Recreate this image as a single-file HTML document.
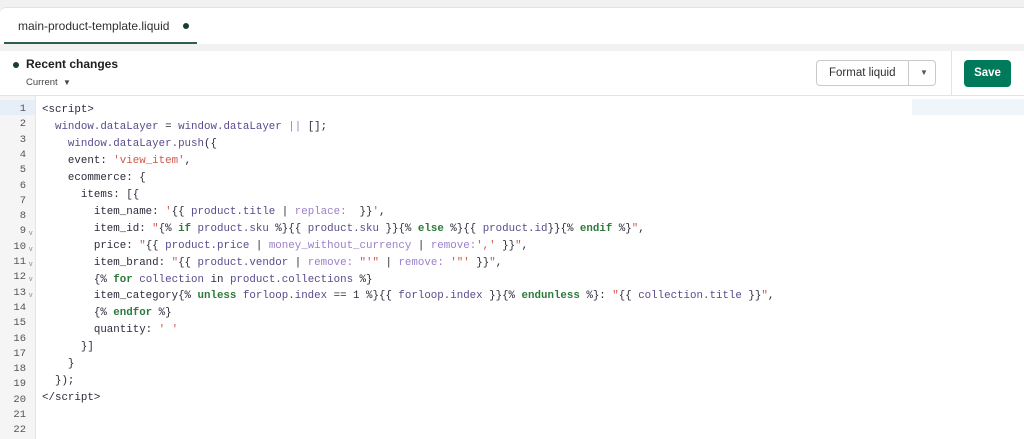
<!DOCTYPE html>
<html><head><style>
body{margin:0;width:1024px;height:439px;background:#f1f1f1;overflow:hidden;font-family:"Liberation Sans",sans-serif;position:relative}
.tabbar{position:absolute;left:0;top:7px;width:1024px;height:36px;background:#fff;border-top:1px solid #e3e3e3;border-radius:6px 0 0 0}
.tab{position:absolute;left:18px;top:11px;font-size:12px;color:#303030}
.dot{position:absolute;width:6px;height:6px;border-radius:50%;background:#1a3d33}
.ul{position:absolute;left:4px;top:34px;width:193px;height:2px;background:#2e5e4e}
.hdr{position:absolute;left:0;top:51px;width:1024px;height:44px;background:#fff;border-bottom:1px solid #e3e3e3}
.rc{position:absolute;left:26px;top:6px;font-size:12px;color:#202020;font-weight:600}
.cur{position:absolute;left:26px;top:26px;font-size:9.5px;color:#444}
.fmt{position:absolute;left:816px;top:9px;width:120px;height:26px;border:1px solid #c9c9c9;border-radius:4px;box-sizing:border-box;font-size:11.5px;color:#303030}
.save{position:absolute;left:964px;top:9px;width:47px;height:27px;background:#007a5a;border-radius:4px;color:#fff;font-size:11.5px;font-weight:bold;text-align:center;line-height:27px}
.sep{position:absolute;left:951px;top:0;width:1px;height:44px;background:#e3e3e3}
.code{position:absolute;left:0;top:96px;width:1024px;height:343px;background:#fff}
.gut{position:absolute;left:0;top:0;width:35px;height:343px;background:#f5f5f5;border-right:1px solid #e6e6e6}
.ln{position:absolute;left:0;width:26px;text-align:right;font:10.5px "Liberation Mono",monospace;color:#555}
.fo{position:absolute;left:29px;font-size:7px;color:#888}
.l{position:absolute;left:42px;font:10.8px "Liberation Mono",monospace;color:#2b2b3b;white-space:pre}
.p{color:#5b4a8c}.f{color:#9b7fc9}.s{color:#d0584a}.k{color:#2c7a3c;font-weight:bold}
</style></head><body>
<div class="tabbar"><div class="tab">main-product-template.liquid</div><div class="dot" style="left:183px;top:15px"></div><div class="ul"></div></div>
<div class="hdr">
<div class="dot" style="left:13px;top:11px"></div>
<div class="rc">Recent changes</div>
<div class="cur">Current &nbsp;<span style="font-size:8px">▼</span></div>
<div class="fmt"><span style="position:absolute;left:12px;top:6px">Format liquid</span><div style="position:absolute;left:91px;top:0;width:1px;height:24px;background:#c9c9c9"></div><span style="position:absolute;left:103px;top:7px;font-size:8px;color:#555">▼</span></div>
<div class="sep"></div>
<div class="save">Save</div>
</div>
<div class="code">
<div style="position:absolute;left:912px;top:3px;width:112px;height:16px;background:#eef6fc"></div>
<div class="gut"><div style="position:absolute;left:0;top:4px;width:35px;height:15px;background:#e6eef7"></div></div>
<div class="ln" style="top:7px">1</div><div class="ln" style="top:22px">2</div><div class="ln" style="top:38px">3</div><div class="ln" style="top:53px">4</div><div class="ln" style="top:68px">5</div><div class="ln" style="top:84px">6</div><div class="ln" style="top:99px">7</div><div class="ln" style="top:114px">8</div><div class="ln" style="top:129px">9</div><div class="ln" style="top:145px">10</div><div class="ln" style="top:160px">11</div><div class="ln" style="top:175px">12</div><div class="ln" style="top:191px">13</div><div class="ln" style="top:206px">14</div><div class="ln" style="top:221px">15</div><div class="ln" style="top:237px">16</div><div class="ln" style="top:252px">17</div><div class="ln" style="top:267px">18</div><div class="ln" style="top:282px">19</div><div class="ln" style="top:298px">20</div><div class="ln" style="top:313px">21</div><div class="ln" style="top:328px">22</div>
<div class="fo" style="top:134px">v</div><div class="fo" style="top:150px">v</div><div class="fo" style="top:165px">v</div><div class="fo" style="top:180px">v</div><div class="fo" style="top:196px">v</div>
<div class="l" style="top:8px">&lt;script&gt;</div>
<div class="l" style="top:25px">  <span class="p">window.dataLayer</span> = <span class="p">window.dataLayer</span> <span class="f">||</span> [];</div>
<div class="l" style="top:42px">    <span class="p">window.dataLayer.push</span>({</div>
<div class="l" style="top:59px">    event: <span class="s">'view_item'</span>,</div>
<div class="l" style="top:76px">    ecommerce: {</div>
<div class="l" style="top:93px">      items: [{</div>
<div class="l" style="top:110px">        item_name: <span class="s">'</span>{{ <span class="p">product.title</span> | <span class="f">replace:</span>  }}<span class="s">'</span>,</div>
<div class="l" style="top:127px">        item_id: <span class="s">"</span>{% <span class="k">if</span> <span class="p">product.sku</span> %}{{ <span class="p">product.sku</span> }}{% <span class="k">else</span> %}{{ <span class="p">product.id</span>}}{% <span class="k">endif</span> %}<span class="s">"</span>,</div>
<div class="l" style="top:144px">        price: <span class="s">"</span>{{ <span class="p">product.price</span> | <span class="f">money_without_currency</span> | <span class="f">remove:</span><span class="s">','</span> }}<span class="s">"</span>,</div>
<div class="l" style="top:161px">        item_brand: <span class="s">"</span>{{ <span class="p">product.vendor</span> | <span class="f">remove:</span> <span class="s">"'"</span> | <span class="f">remove:</span> <span class="s">'"'</span> }}<span class="s">"</span>,</div>
<div class="l" style="top:178px">        {% <span class="k">for</span> <span class="p">collection</span> in <span class="p">product.collections</span> %}</div>
<div class="l" style="top:194px">        item_category{% <span class="k">unless</span> <span class="p">forloop.index</span> == 1 %}{{ <span class="p">forloop.index</span> }}{% <span class="k">endunless</span> %}: <span class="s">"</span>{{ <span class="p">collection.title</span> }}<span class="s">"</span>,</div>
<div class="l" style="top:211px">        {% <span class="k">endfor</span> %}</div>
<div class="l" style="top:228px">        quantity: <span class="s">' '</span></div>
<div class="l" style="top:245px">      }]</div>
<div class="l" style="top:262px">    }</div>
<div class="l" style="top:279px">  });</div>
<div class="l" style="top:296px">&lt;/script&gt;</div>
</div>
</body></html>
